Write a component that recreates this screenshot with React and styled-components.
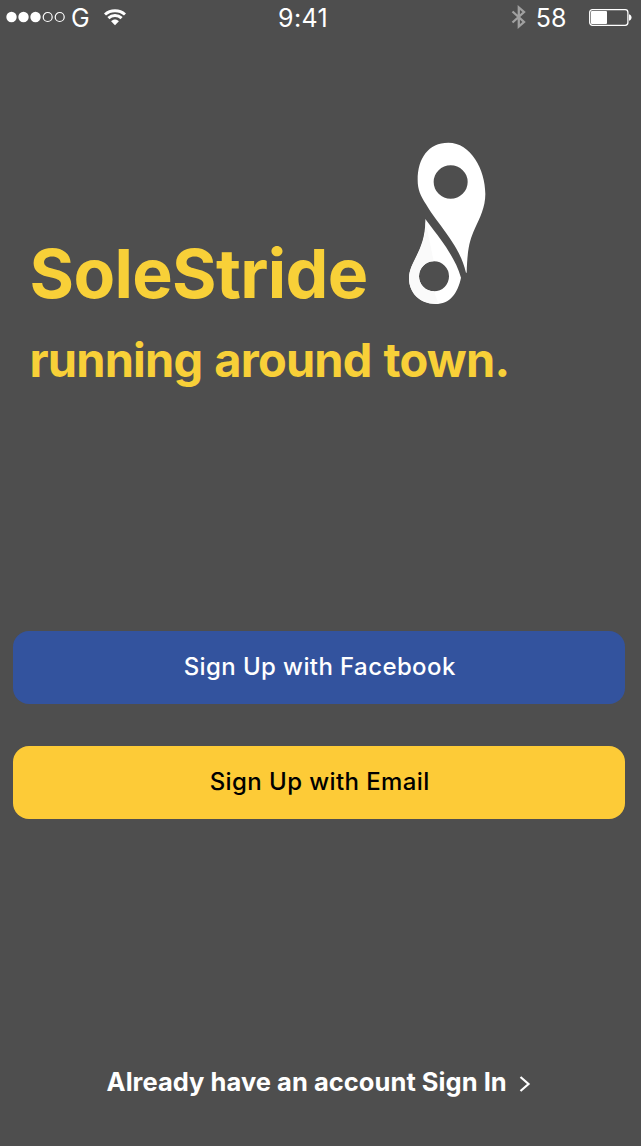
import React from "react";
import styled, { createGlobalStyle } from "styled-components";

const GlobalStyle = createGlobalStyle`
  * { box-sizing: border-box; }
  body { margin: 0; background: #4e4e4e; font-family: Inter, "Liberation Sans", sans-serif; }
`;

const Screen = styled.main`
  display: flex;
  flex-direction: column;
  width: 641px;
  height: 1146px;
  overflow: hidden;
  background: #4e4e4e;
  color: #fff;
`;

const StatusBar = styled.header`
  display: grid;
  grid-template-columns: 272px auto 1fr;
  height: 37px;
  padding: 0 9px 0 6px;
  font-size: 25px;
  line-height: 37px;
`;

const StatusGroup = styled.div`
  display: flex;
  align-items: center;
  justify-content: ${(p) => (p.$end ? "flex-end" : "flex-start")};
`;

const Carrier = styled.span`
  margin: 0 14px 0 6px;
`;

const Clock = styled.time`
  letter-spacing: 0.4px;
`;

const BatteryLevel = styled.span`
  margin: 0 22.5px 0 10px;
`;

const Icon = styled.svg`
  display: block;
  flex: none;
  margin-bottom: ${(p) => p.$lift || 0}px;
`;

const Hero = styled.section`
  padding: 105px 0 0 29.5px;
`;

const Brand = styled.div`
  display: flex;
  align-items: flex-end;
  color: #f8d038;
`;

const Title = styled.h1`
  width: 379.5px;
  margin: 0;
  font-size: 68px;
  font-weight: 700;
  line-height: 62px;
  letter-spacing: -0.65px;
`;

const Tagline = styled.p`
  margin: 26px 0 0;
  color: #f8d038;
  font-size: 47px;
  font-weight: 700;
  line-height: 59px;
  letter-spacing: -0.83px;
  word-spacing: 1.7px;
`;

const Actions = styled.div`
  display: flex;
  flex-direction: column;
  gap: 42px;
  margin-top: 242px;
  padding: 0 16px 0 13.4px;
`;

const Button = styled.button`
  height: 73px;
  padding: 0 0 2px 1px;
  border: 0;
  border-radius: 16px;
  background: ${(p) => p.$background};
  color: ${(p) => p.$color};
  font: 500 24px/30px Inter, "Liberation Sans", sans-serif;
  letter-spacing: 0.4px;
`;

const SignIn = styled.a`
  display: flex;
  align-items: center;
  align-self: flex-start;
  gap: 12px;
  margin: auto 0 48px 106.6px;
  font-size: 25.5px;
  font-weight: 700;
  line-height: 32px;
  letter-spacing: 0.04px;
`;

function SignalDots() {
  return (
    <Icon width="59" height="12" viewBox="0 0 59 12" $lift={3}>
      {[5.5, 17.5, 29.5].map((x) => (
        <circle key={x} cx={x} cy="6" r="5.2" fill="#fff" />
      ))}
      {[41.7, 53.7].map((x) => (
        <circle key={x} cx={x} cy="6" r="4.5" fill="none" stroke="#fff" strokeWidth="1.2" />
      ))}
    </Icon>
  );
}

function WifiIcon() {
  return (
    <Icon width="22" height="17" viewBox="0 0 22 17" $lift={3}>
      <g fill="none" stroke="#fff" strokeWidth="3">
        <path d="M1 5.5C6.5 .5 15.5 .5 21 5.5" />
        <path d="M4.4 9.2C8.2 5.7 13.8 5.7 17.6 9.2" />
      </g>
      <path d="M7.1 12.2C9.5 10 12.5 10 14.9 12.2L11 16.2Z" fill="#fff" />
    </Icon>
  );
}

function BluetoothIcon() {
  return (
    <Icon width="15" height="24" viewBox="0 0 15 24" $lift={3}>
      <path d="M1.5 6.5L13 17L7.8 21.5V2.5L13 7L1.5 17.5" fill="none" stroke="#a0a0a0" strokeWidth="2.3" />
    </Icon>
  );
}

function BatteryIcon() {
  return (
    <Icon width="43" height="17" viewBox="0 0 43 17" $lift={3}>
      <rect x=".7" y=".7" width="38.2" height="15.6" rx="2.7" fill="none" stroke="#fff" strokeWidth="1.3" />
      <rect x="2" y="2" width="16" height="13" rx="1" fill="#fff" />
      <path d="M40 5.3C43.4 6.2 43.4 10.8 40 11.7Z" fill="#fff" />
    </Icon>
  );
}

function Logo() {
  return (
    <Icon width="77" height="162" viewBox="27 36 231 486">
      <path
        fill="#fff"
        fillRule="evenodd"
        d="M145 38C212 38 256 118 256 192C256 232 240 262 225 295C208 332 202 360 200 428L198 428C190 395 180 375 163 346C146 318 127 293 108 268C97 253 88 240 78 223C62 197 53 180 53 150C53 85 85 38 145 38ZM203 156A51 50 0 1 0 101 156A51 50 0 1 0 203 156Z"
      />
      <path
        fill="#fff"
        fillRule="evenodd"
        d="M76 267C85 279 94 291 103 303C115 318 126 333 138 351C155 378 173 407 183 443C173 490 150 522 106 522C60 522 27 490 27 445C27 395 78 360 76 267ZM147 439A45 45 0 1 0 57 439A45 45 0 1 0 147 439Z"
      />
      <path
        fill="#fafafa"
        d="M77 275L101 394C77 394 57 414 57 439C57 464 77 484 102 484L115 521C65 526 27 490 27 445C27 395 78 360 77 275Z"
      />
    </Icon>
  );
}

export default function App() {
  return (
    <>
      <GlobalStyle />
      <Screen>
        <StatusBar>
          <StatusGroup>
            <SignalDots />
            <Carrier>G</Carrier>
            <WifiIcon />
          </StatusGroup>
          <Clock>9:41</Clock>
          <StatusGroup $end>
            <BluetoothIcon />
            <BatteryLevel>58</BatteryLevel>
            <BatteryIcon />
          </StatusGroup>
        </StatusBar>
        <Hero>
          <Brand>
            <Title>SoleStride</Title>
            <Logo />
          </Brand>
          <Tagline>running around town.</Tagline>
        </Hero>
        <Actions>
          <Button $background="#33539e" $color="#fff">Sign Up with Facebook</Button>
          <Button $background="#fdcb37" $color="#000">Sign Up with Email</Button>
        </Actions>
        <SignIn>
          Already have an account Sign In
          <Icon width="12" height="18" viewBox="0 0 12 18" $lift={-3}>
            <path d="M1.5 2L9.5 9L1.5 16" fill="none" stroke="#fff" strokeWidth="2.2" />
          </Icon>
        </SignIn>
      </Screen>
    </>
  );
}
